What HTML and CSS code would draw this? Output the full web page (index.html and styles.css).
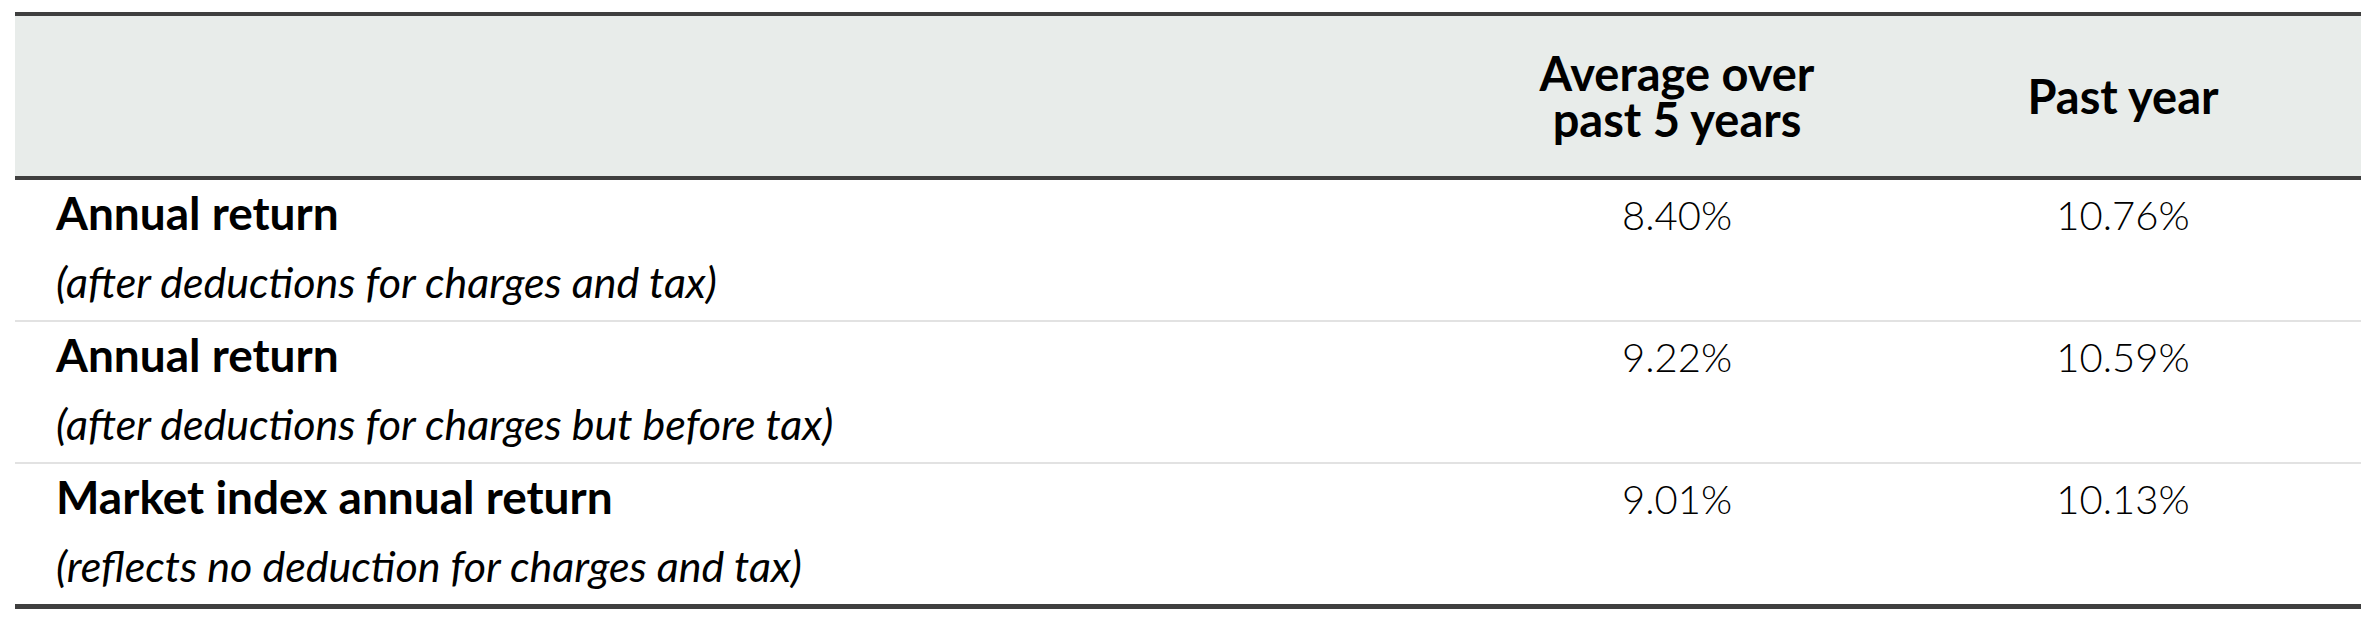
FILE: index.html
```html
<!DOCTYPE html>
<html lang="en">
<head>
<meta charset="utf-8">
<title>Returns</title>
<link rel="stylesheet" href="styles.css">
</head>
<body>
<div class="wrap">
  <table class="perf">
    <colgroup>
      <col class="c-label">
      <col class="c-avg">
      <col class="c-year">
    </colgroup>
    <thead>
      <tr>
        <th class="h-label"></th>
        <th class="h-num"><span class="hl">Average over</span><span class="hl">past 5 years</span></th>
        <th class="h-num"><span class="hl">Past year</span></th>
      </tr>
    </thead>
    <tbody>
      <tr>
        <td class="label"><div class="title">Annual return</div><div class="sub">(after deductions for charges and tax)</div></td>
        <td class="num">8.40%</td>
        <td class="num">10.76%</td>
      </tr>
      <tr>
        <td class="label"><div class="title">Annual return</div><div class="sub">(after deductions for charges but before tax)</div></td>
        <td class="num">9.22%</td>
        <td class="num">10.59%</td>
      </tr>
      <tr class="last">
        <td class="label"><div class="title">Market index annual return</div><div class="sub">(reflects no deduction for charges and tax)</div></td>
        <td class="num">9.01%</td>
        <td class="num">10.13%</td>
      </tr>
    </tbody>
  </table>
</div>
</body>
</html>
```
FILE: styles.css
```css
html, body {
  margin: 0;
  padding: 0;
  background: #ffffff;
}

.wrap {
  padding: 12px 11px 0 15px;
}

.perf {
  width: 2346px;
  border-collapse: collapse;
  table-layout: fixed;
  font-family: Lato, "Liberation Sans", sans-serif;
  color: #000;
}

.c-label { width: 1454px; }
.c-avg { width: 416px; }
.c-year { width: 476px; }

.perf thead th {
  background: #e8ecea;
  border-top: 4px solid #3f3f3f;
  border-bottom: 4px solid #3f3f3f;
  height: 160px;
  padding: 0;
  vertical-align: middle;
  font-size: 47px;
  font-weight: 700;
  line-height: 46px;
  text-align: center;
}

.hl {
  display: block;
}

.perf tbody td {
  border-bottom: 2px solid #e2e2e2;
  vertical-align: top;
}

.perf tbody tr.last td {
  border-bottom: 5px solid #3f3f3f;
}

.label {
  padding: 8px 0 9px 41px;
}

.title {
  font-size: 46px;
  font-weight: 700;
  line-height: 50px;
}

.sub {
  margin-top: 15px;
  font-size: 43px;
  font-style: italic;
  font-weight: 400;
  line-height: 58px;
}

.num {
  padding: 10px 0 0 0;
  font-size: 40px;
  font-weight: 300;
  line-height: 50px;
  text-align: center;
}
```
